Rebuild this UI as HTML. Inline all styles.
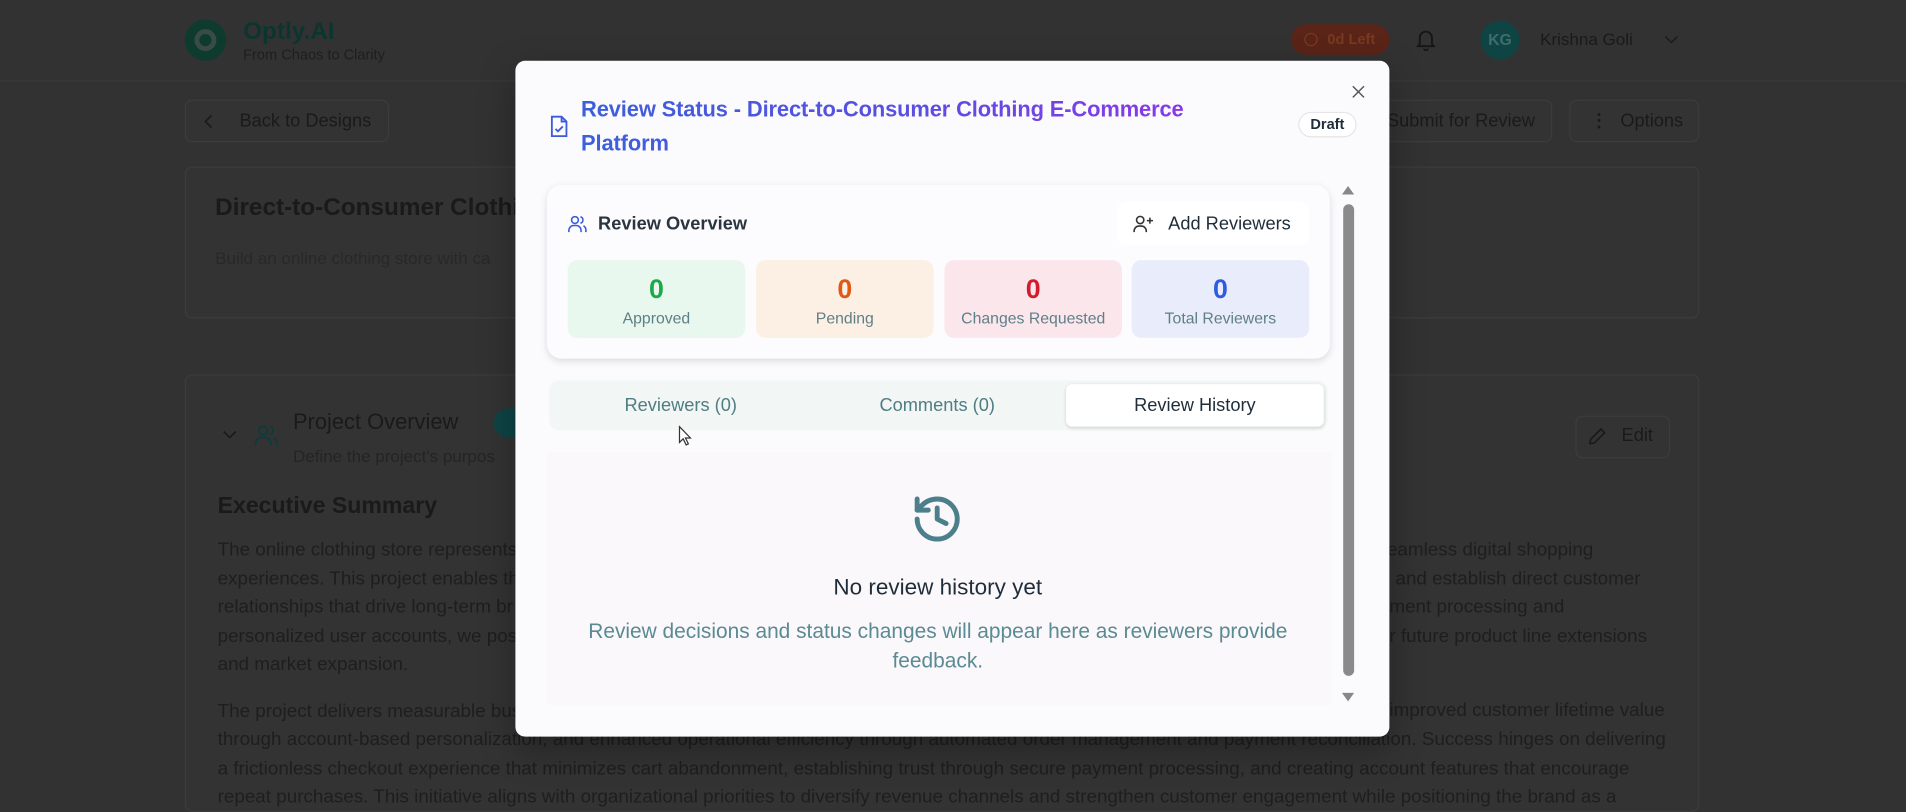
<!DOCTYPE html>
<html><head><meta charset="utf-8"><style>
*{box-sizing:border-box;margin:0;padding:0}
html,body{width:1906px;height:798px;overflow:hidden;background:#323232;font-family:"Liberation Sans",sans-serif}
#w{position:absolute;left:0;top:0;width:1568px;height:656px;transform:scale(1.21556);transform-origin:0 0;background:#323232}
.a{position:absolute}
.bd{border:1px solid #3c3c3c;border-radius:6px;background:#333}
.dk{color:#1a1a1a}
.st{position:absolute;top:214px;width:146px;height:64px;border-radius:8px;text-align:center}
.st b{display:block;font-size:22px;margin-top:12px;line-height:24px}
.st span{display:block;font-size:13px;color:#5f7f86;margin-top:4px}
.tab{position:absolute;top:316px;height:35px;line-height:35px;font-size:15px;color:#4f7d84;text-align:center}
.r{position:absolute;left:1141px;white-space:nowrap}
</style></head><body><div id="w">
<!-- header -->
<div class="a" style="left:0;top:66px;width:1568px;height:1px;background:#3a3a3a"></div>
<div class="a" style="left:152px;top:16px;width:34px;height:34px;border-radius:50%;background:#0d3b2e"></div>
<div class="a" style="left:160px;top:24px;width:18px;height:18px;border-radius:50%;border:4px solid #3a4a45;background:#0d3b2e"></div>
<div class="a" style="left:200px;top:15px;font-size:20px;font-weight:bold;color:#0c3530">Optly.AI</div>
<div class="a" style="left:200px;top:38px;font-size:12px;color:#1e1e1e">From Chaos to Clarity</div>
<div class="a" style="left:1062px;top:20px;width:81px;height:25px;border-radius:13px;background:#5a2418;color:#7a3a20;font-size:12px;font-weight:bold;line-height:25px;padding-left:30px">0d Left</div>
<div class="a" style="left:1073px;top:27px;width:11px;height:11px;border-radius:50%;border:1px solid #7a3a20"></div>
<svg class="a" style="left:1165px;top:24px" width="16" height="18" viewBox="0 0 16 18" fill="none" stroke="#151515" stroke-width="1.5"><path d="M3 12V7a5 5 0 0110 0v5l1.5 2h-13z"/><path d="M6.5 16a1.5 1.5 0 003 0"/></svg>
<div class="a" style="left:1218px;top:17px;width:32px;height:32px;border-radius:50%;background:#0f4445;color:#3d6e6e;font-size:13px;font-weight:bold;text-align:center;line-height:32px">KG</div>
<div class="a dk" style="left:1267px;top:24px;font-size:14px">Krishna Goli</div>
<svg class="a" style="left:1369px;top:29px" width="12" height="8" viewBox="0 0 12 8" fill="none" stroke="#1c1c1c" stroke-width="1.3"><path d="M1 1l5 5 5-5"/></svg>
<!-- row 2 -->
<div class="a bd" style="left:152px;top:82px;width:168px;height:35px"></div>
<svg class="a" style="left:168px;top:94px" width="8" height="12" viewBox="0 0 8 12" fill="none" stroke="#1a1a1a" stroke-width="1.4"><path d="M6 1L1 6l5 5"/></svg>
<div class="a dk" style="left:197px;top:91px;font-size:15px">Back to Designs</div>
<div class="a bd" style="left:1120px;top:82px;width:157px;height:35px"></div>
<div class="a dk" style="left:1141px;top:91px;font-size:15px">Submit for Review</div>
<div class="a bd" style="left:1291px;top:82px;width:107px;height:35px"></div>
<div class="a dk" style="left:1308px;top:90px;font-size:15px;font-weight:bold">⋮</div>
<div class="a dk" style="left:1333px;top:91px;font-size:15px">Options</div>
<div class="a bd" style="left:152px;top:137px;width:1246px;height:125px"></div>
<div class="a dk" style="left:177px;top:160px;font-size:20px;font-weight:bold">Direct-to-Consumer Clothing</div>
<div class="a" style="left:177px;top:204px;font-size:14px;color:#282828">Build an online clothing store with ca</div>
<div class="a bd" style="left:152px;top:308px;width:1246px;height:360px"></div>
<svg class="a" style="left:183px;top:354px" width="12" height="8" viewBox="0 0 12 8" fill="none" stroke="#1a1a1a" stroke-width="1.4"><path d="M1 1l5 5 5-5"/></svg>
<svg class="a" style="left:208px;top:348px" width="22" height="20" viewBox="0 0 16 16" fill="none" stroke="#0f3a3c" stroke-width="1.3"><circle cx="6" cy="5" r="2.8"/><path d="M1 15v-1.5a4 4 0 014-4h2a4 4 0 014 4V15"/><path d="M10.5 2.3a2.8 2.8 0 010 5.4M13 9.8a4 4 0 012 3.5V15"/></svg>
<div class="a dk" style="left:241px;top:337px;font-size:18px">Project Overview</div>
<div class="a" style="left:406px;top:336px;width:30px;height:24px;border-radius:12px;background:#0f4445"></div>
<div class="a" style="left:241px;top:367px;font-size:14px;color:#242424">Define the project's purpos</div>
<div class="a bd" style="left:1296px;top:342px;width:78px;height:35px"></div>
<svg class="a" style="left:1306px;top:351px" width="16" height="16" viewBox="0 0 16 16" fill="none" stroke="#1a1a1a" stroke-width="1.4"><path d="M11 2l3 3-8.5 8.5L2 14l.5-3.5z"/></svg>
<div class="a dk" style="left:1334px;top:350px;font-size:15px">Edit</div>
<div class="a dk" style="left:179px;top:406px;font-size:19px;font-weight:bold">Executive Summary</div>
<div class="a" style="left:179px;top:441px;width:1200px;font-size:15.5px;line-height:23.5px;color:#1e1e1e">
<div>The online clothing store represents</div>
<div>experiences. This project enables th</div>
<div>relationships that drive long-term br</div>
<div>personalized user accounts, we pos</div>
<div>and market expansion.</div>
<div style="margin-top:15px">The project delivers measurable bus</div>
<div>through account-based personalization, and enhanced operational efficiency through automated order management and payment reconciliation. Success hinges on delivering</div>
<div>a frictionless checkout experience that minimizes cart abandonment, establishing trust through secure payment processing, and creating account features that encourage</div>
<div>repeat purchases. This initiative aligns with organizational priorities to diversify revenue channels and strengthen customer engagement while positioning the brand as a</div>
</div>
<div class="a" style="left:0;top:441px;font-size:15.5px;line-height:23.5px;color:#1e1e1e">
<div class="r" style="top:0">eamless digital shopping</div>
<div class="r" style="top:23.5px;left:1148px">and establish direct customer</div>
<div class="r" style="top:47px;left:1143px">ment processing and</div>
<div class="r" style="top:70.5px;left:1143px">r future product line extensions</div>
<div class="r" style="top:132px;left:1143px">improved customer lifetime value</div>
</div>
<!-- modal -->
<div class="a" style="left:424px;top:50px;width:719px;height:556px;border-radius:8px;background:#fbfafd;box-shadow:0 10px 30px rgba(0,0,0,.3)"></div>
<svg class="a" style="left:1112px;top:70px" width="11" height="11" viewBox="0 0 12 12" stroke="#555" stroke-width="1.3"><path d="M1 1l10 10M11 1L1 11"/></svg>
<svg class="a" style="left:452px;top:94px" width="16" height="20" viewBox="0 0 16 20" fill="none" stroke="#3b5bdb" stroke-width="1.5"><path d="M2 2h8l4 4v12H2z"/><path d="M10 2v4h4"/><path d="M5 12l2 2 4-4"/></svg>
<div class="a" style="left:478px;top:76px;width:540px;font-size:18px;font-weight:bold;line-height:28px;background:linear-gradient(90deg,#3c5fdc,#5a4fe0 50%,#9333ea);-webkit-background-clip:text;background-clip:text;color:transparent;letter-spacing:-0.1px">Review Status - Direct-to-Consumer Clothing E-Commerce Platform</div>
<div class="a" style="left:1068px;top:92px;width:48px;height:21px;border:1px solid #e6e6ea;border-radius:11px;background:#fff;font-size:12px;font-weight:bold;color:#1f2d3a;text-align:center;line-height:19px">Draft</div>
<!-- scrollbar -->
<div class="a" style="left:1105px;top:168px;width:9px;height:388px;border-radius:5px;background:#8a8a8a"></div>
<div class="a" style="left:1104px;top:153px;width:0;height:0;border-left:5px solid transparent;border-right:5px solid transparent;border-bottom:7px solid #888"></div>
<div class="a" style="left:1104px;top:570px;width:0;height:0;border-left:5px solid transparent;border-right:5px solid transparent;border-top:7px solid #888"></div>
<!-- overview card -->
<div class="a" style="left:450px;top:152px;width:644px;height:143px;border-radius:12px;background:#fcfbfd;box-shadow:0 2px 6px rgba(0,0,0,.12)"></div>
<svg class="a" style="left:467px;top:176px" width="16" height="16" viewBox="0 0 16 16" fill="none" stroke="#3b5bdb" stroke-width="1.3"><circle cx="6" cy="5" r="2.8"/><path d="M1 15v-1.5a4 4 0 014-4h2a4 4 0 014 4V15"/><path d="M10.5 2.3a2.8 2.8 0 010 5.4M13 9.8a4 4 0 012 3.5V15"/></svg>
<div class="a" style="left:492px;top:176px;font-size:15px;font-weight:bold;color:#2a3540">Review Overview</div>
<div class="a" style="left:919px;top:166px;width:158px;height:36px;border-radius:8px;background:#fff"></div>
<svg class="a" style="left:932px;top:176px" width="17" height="16" viewBox="0 0 17 16" fill="none" stroke="#333" stroke-width="1.3"><circle cx="6" cy="5" r="3"/><path d="M1 15v-1a4 4 0 014-4h2a4 4 0 014 4v1M14 3v5M11.5 5.5h5"/></svg>
<div class="a" style="left:961px;top:176px;font-size:15px;color:#1f2d3a">Add Reviewers</div>
<div class="st" style="left:467px;background:#e8f8ee"><b style="color:#1fa84a">0</b><span>Approved</span></div>
<div class="st" style="left:622px;background:#fcefe3"><b style="color:#e05a13">0</b><span>Pending</span></div>
<div class="st" style="left:777px;background:#fbe6ec"><b style="color:#d01c2c">0</b><span>Changes Requested</span></div>
<div class="st" style="left:931px;background:#e9edfb"><b style="color:#2f5be0">0</b><span>Total Reviewers</span></div>
<!-- tabs -->
<div class="a" style="left:452px;top:313px;width:640px;height:41px;border-radius:8px;background:#f2f6f4"></div>
<div class="a" style="left:877px;top:316px;width:212px;height:35px;border-radius:5px;background:#fff;box-shadow:0 1px 3px rgba(0,0,0,.15)"></div>
<div class="tab" style="left:452px;width:216px">Reviewers (0)</div>
<div class="tab" style="left:665px;width:212px">Comments (0)</div>
<div class="tab" style="left:877px;width:212px;color:#1f2d3a">Review History</div>
<!-- content -->
<div class="a" style="left:450px;top:372px;width:646px;height:208px;background:#fbf8fb"></div>
<svg class="a" style="left:749px;top:405px" width="44" height="44" viewBox="0 0 24 24" fill="none" stroke="#4b7f8b" stroke-width="2.2" stroke-linecap="round" stroke-linejoin="round"><path d="M3 12a9 9 0 109-9 9.75 9.75 0 00-6.74 2.74L3 8"/><path d="M3 3v5h5"/><path d="M12 7v5l4 2"/></svg>
<div class="a" style="left:450px;top:472px;width:643px;text-align:center;font-size:18.5px;color:#1f2d3a">No review history yet</div>
<div class="a" style="left:465px;top:507px;width:613px;text-align:center;font-size:17.2px;line-height:24px;color:#5a8a93">Review decisions and status changes will appear here as reviewers provide feedback.</div>
<svg class="a" style="left:558px;top:350px" width="11" height="17" viewBox="0 0 11 17"><path d="M1 1v13l3-3 2.5 5 1.8-.9-2.4-4.8H10z" fill="#fff" stroke="#333" stroke-width="1"/></svg>
</div></body></html>
